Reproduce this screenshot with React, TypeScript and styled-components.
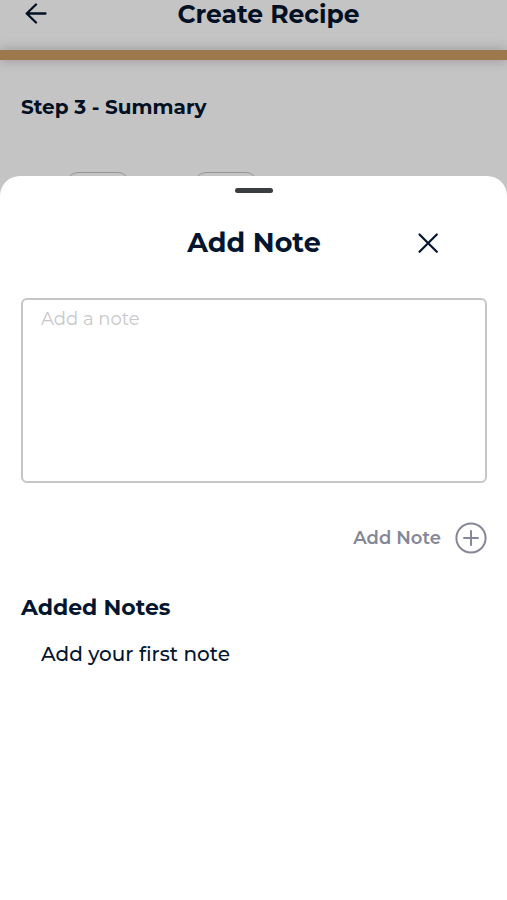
import React, { useState } from "react";
import styled, { createGlobalStyle } from "styled-components";

const navy = "#03152f";

const GlobalStyle = createGlobalStyle`
  *, *::before, *::after { box-sizing: border-box; }
  body {
    margin: 0;
    background: #ffffff;
    color: ${navy};
    font-family: Montserrat, Inter, "Liberation Sans", sans-serif;
  }
  h1, h2, h3, p, ul { margin: 0; padding: 0; }
  button, textarea { font: inherit; color: inherit; }
`;

const Page = styled.div`
  position: relative;
  min-height: 100vh;
  overflow: hidden;
`;

const TopBar = styled.header`
  display: grid;
  grid-template-columns: 56px 1fr 26px;
  align-items: center;
  height: 50px;
  padding-bottom: 23px;
`;

const IconButton = styled.button`
  display: grid;
  place-items: center;
  width: 40px;
  height: 40px;
  padding: 0;
  border: 0;
  background: transparent;
  cursor: pointer;
`;

const BackButton = styled(IconButton)`
  height: 28px;
  margin-left: 16px;
`;

const PageTitle = styled.h1`
  font-size: 25px;
  line-height: 26px;
  font-weight: 700;
  text-align: center;
`;

const Progress = styled.div`
  height: 10px;
  background: #cc9c63;
  box-shadow: 0 0 12px rgba(60, 30, 40, 0.3);
`;

const StepBody = styled.main`
  padding: 34px 20px 0 21px;
`;

const StepTitle = styled.h2`
  font-size: 20px;
  line-height: 26px;
  font-weight: 700;
`;

const Fields = styled.div`
  display: flex;
  gap: 64px;
  padding: 52px 45px 0;
`;

const Field = styled.div`
  width: 64px;
  height: 40px;
  border: 1px solid #c4c4c4;
  border-radius: 12px;
`;

const Backdrop = styled.div`
  position: absolute;
  inset: 0;
  display: flex;
  flex-direction: column;
  padding-top: 176px;
  background: rgba(0, 0, 0, 0.23);
`;

const Sheet = styled.section`
  flex: 1;
  padding: 12px 20px 20px 21px;
  border-radius: 20px 20px 0 0;
  background: #ffffff;
`;

const Handle = styled.div`
  width: 38px;
  height: 5px;
  margin: 0 auto;
  border-radius: 3px;
  background: #3c3d40;
`;

const SheetHeader = styled.div`
  display: grid;
  grid-template-columns: 1fr auto 1fr;
  align-items: center;
  margin: 29px 0 35px;
`;

const SheetTitle = styled.h2`
  grid-column: 2;
  font-size: 27px;
  line-height: 41px;
  font-weight: 700;
`;

const CloseButton = styled(IconButton)`
  justify-self: end;
  margin-right: 39px;
`;

const NoteInput = styled.textarea`
  display: block;
  width: 100%;
  height: 185px;
  padding: 8px 18px;
  border: 2px solid #c6c6c6;
  border-radius: 6px;
  outline: 0;
  background: transparent;
  font-size: 18px;
  line-height: 22px;
  resize: none;

  &::placeholder { color: #c8c8ca; opacity: 1; }
`;

const AddButton = styled.button`
  display: flex;
  align-items: center;
  gap: 14px;
  margin: 39px 0 0 auto;
  padding: 0;
  border: 0;
  background: transparent;
  color: #858797;
  font-size: 18px;
  line-height: 32px;
  font-weight: 600;
  cursor: pointer;
`;

const NotesTitle = styled.h3`
  margin-top: 38px;
  font-size: 22px;
  line-height: 32px;
  font-weight: 700;
`;

const NotesList = styled.ul`
  padding: 16px 20px 0;
  list-style: none;
  font-size: 20px;
  line-height: 28px;
  font-weight: 500;
`;

const ArrowIcon = () => (
  <svg width="22" height="22" viewBox="0 0 22 22" fill="none" stroke="currentColor" strokeWidth="2.3" strokeLinecap="round" strokeLinejoin="round" aria-hidden="true">
    <path d="M11 1.5 1.7 10.5 11 19.5M1.7 10.5H20.5" />
  </svg>
);

const CloseIcon = () => (
  <svg width="22" height="22" viewBox="0 0 22 22" fill="none" stroke="currentColor" strokeWidth="2.2" strokeLinecap="round" aria-hidden="true">
    <path d="M2.5 2.5 19.8 19.8M19.8 2.5 2.5 19.8" />
  </svg>
);

const PlusIcon = () => (
  <svg width="32" height="32" viewBox="0 0 32 32" fill="none" stroke="currentColor" strokeWidth="2" strokeLinecap="round" aria-hidden="true">
    <circle cx="16" cy="16" r="14.6" />
    <path d="M16 9V23M9 16H23" />
  </svg>
);

export default function App() {
  const [draft, setDraft] = useState("");
  const [notes, setNotes] = useState<string[]>([]);

  const addNote = () => {
    if (!draft.trim()) return;
    setNotes([...notes, draft.trim()]);
    setDraft("");
  };

  return (
    <Page>
      <GlobalStyle />
      <TopBar>
        <BackButton type="button" aria-label="Back"><ArrowIcon /></BackButton>
        <PageTitle>Create Recipe</PageTitle>
      </TopBar>
      <Progress />
      <StepBody>
        <StepTitle>Step 3 - Summary</StepTitle>
        <Fields>
          <Field />
          <Field />
        </Fields>
      </StepBody>
      <Backdrop>
        <Sheet role="dialog" aria-labelledby="sheet-title">
          <Handle />
          <SheetHeader>
            <SheetTitle id="sheet-title">Add Note</SheetTitle>
            <CloseButton type="button" aria-label="Close"><CloseIcon /></CloseButton>
          </SheetHeader>
          <NoteInput
            aria-label="Note"
            placeholder="Add a note"
            value={draft}
            onChange={(event) => setDraft(event.target.value)}
          />
          <AddButton type="button" onClick={addNote}>
            Add Note
            <PlusIcon />
          </AddButton>
          <NotesTitle>Added Notes</NotesTitle>
          <NotesList>
            {notes.length === 0 && <li>Add your first note</li>}
            {notes.map((note, index) => <li key={index}>{note}</li>)}
          </NotesList>
        </Sheet>
      </Backdrop>
    </Page>
  );
}
